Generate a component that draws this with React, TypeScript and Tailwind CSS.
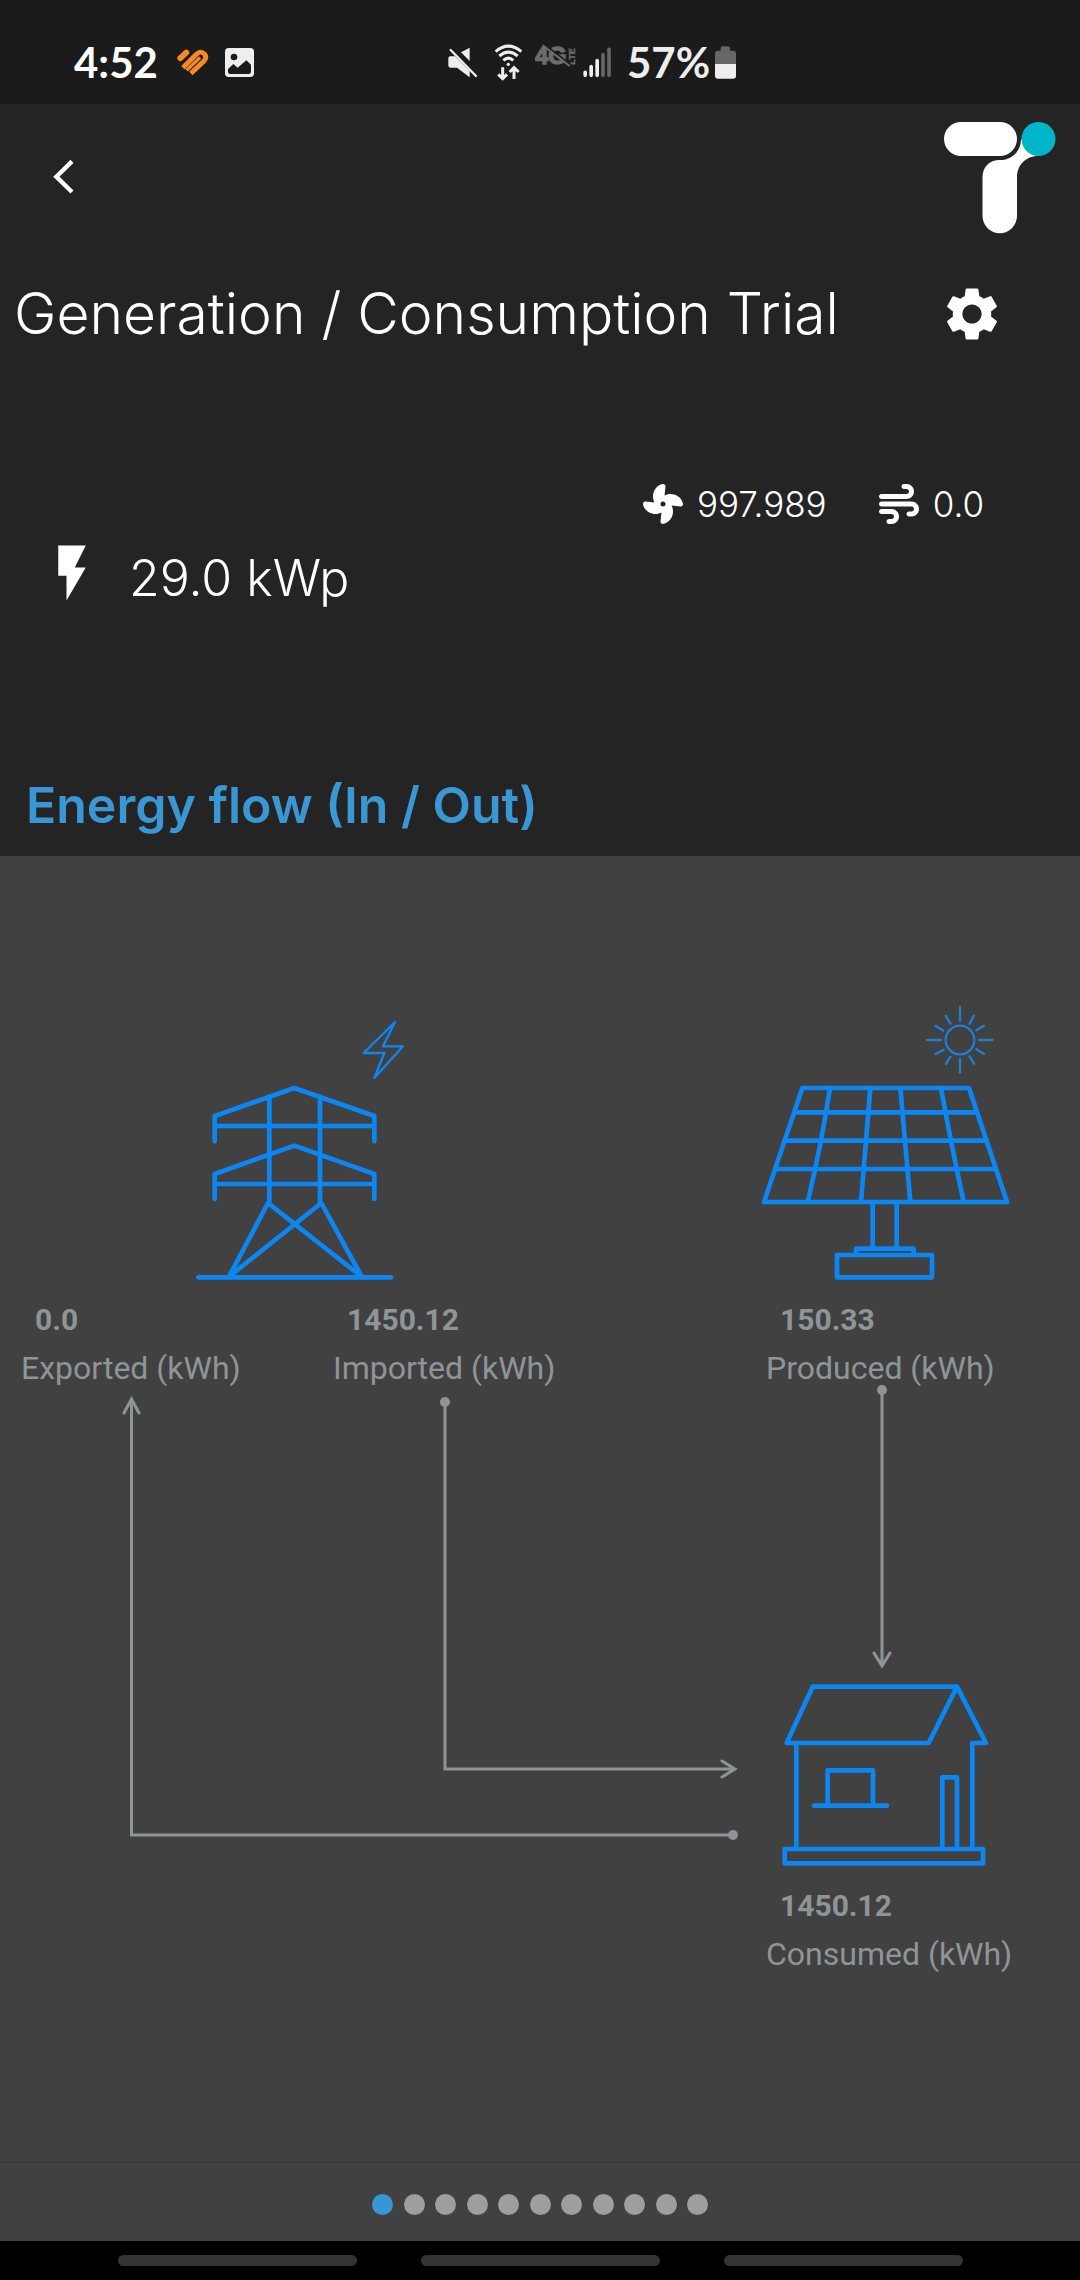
import { useState } from "react";
import { FaFan, FaWind } from "react-icons/fa6";
import { MdFlashOn, MdSettings } from "react-icons/md";

function StatusBar() {
  return (
    <div className="flex h-[104px] items-center bg-[#1b1b1b] pt-5 pl-[74px] font-['Lato',sans-serif] text-[42px] leading-none font-bold text-white">
      <span>4:52</span>
      <div className="ml-[18px] flex items-center gap-[15px]">
        <svg viewBox="528 148 100 88" className="h-[29px] w-[33px]" aria-label="Fitness">
          <g fill="none" stroke="#f58a28" strokeWidth="15">
            <path d="M541 179 L559 162" strokeWidth="18" strokeLinecap="round" />
            <path d="M549 208 L589 168 Q602 154 614 166 Q623 177 612 188 L573 225" />
            <path d="M560 216 L601 177" strokeWidth="10" />
          </g>
        </svg>
        <svg viewBox="672 144 93 93" className="size-[31px]" aria-label="Picture">
          <rect x="675" y="147" width="87" height="87" rx="11" fill="#eee" />
          <circle cx="702" cy="174" r="10" fill="#1b1b1b" />
          <path d="M684 210 L700 195 L713 206 L739 184 L753 197 V218 Q753 225 746 225 H691 Q684 225 684 218 Z" fill="#1b1b1b" />
        </svg>
      </div>
      <div className="ml-48 flex items-center text-[#eee]">
        <svg viewBox="78 138 93 102" className="h-[34px] w-[31px]" aria-label="Muted">
          <path d="M120 160 L146 146 V186 Z M82 178 Q82 172 88 172 H102 L146 216 V235 L108 206 H90 Q82 206 82 198 Z" fill="#eee" />
          <path d="M89 153 L165 231" stroke="#eee" strokeWidth="7" strokeLinecap="round" />
        </svg>
        <svg viewBox="219 129 87 117" className="ml-4 h-[39px] w-[29px]" aria-label="Wi-Fi">
          <g fill="none" stroke="#eee" strokeWidth="9">
            <path d="M224 155 Q262 122 301 155" />
            <path d="M235 168 Q262 145 290 168" />
            <path d="M247 181 Q262 168 277 181" />
            <path d="M245 202 V235 M232 223 L245 236 L258 223 M279 237 V204 M266 216 L279 203 L293 216" />
          </g>
          <circle cx="262" cy="193" r="5" fill="#eee" />
        </svg>
        <svg viewBox="345 129 123 117" className="ml-3 h-[39px] w-[41px]" aria-label="4G LTE off">
          <g fill="#6c6c6c" stroke="#6c6c6c" fontWeight="700" fontFamily="Liberation Sans, sans-serif">
            <text x="346" y="192" fontSize="70" strokeWidth="4">
              4G
            </text>
            <text transform="translate(465 194) rotate(-90)" fontSize="27" strokeWidth="1">
              LTE
            </text>
          </g>
          <path d="M371 132 L453 194" stroke="#1b1b1b" strokeWidth="5" />
          <path d="M368 136 L449 198" stroke="#6c6c6c" strokeWidth="6" />
        </svg>
        <svg viewBox="486 138 90 96" className="ml-1.5 h-8 w-[30px]" aria-label="Signal">
          <g strokeWidth="11" strokeLinecap="round">
            <path d="M495.500 217 V226 M513.500 200 V226 M531.500 182 V226" stroke="#eee" />
            <path d="M549 164 V226 M567 148 V226" stroke="#666" />
          </g>
        </svg>
        <span className="ml-[15px]">57%</span>
        <svg viewBox="882 138 69 105" className="ml-1 h-[35px] w-[23px]" aria-label="Battery">
          <path d="M885 195 V164 Q885 155 894 155 H902 V147 Q902 142 908 142 H924 Q930 142 930 147 V155 H939 Q948 155 948 164 V195 Z" fill="#666" />
          <path d="M885 195 H948 V230 Q948 239 939 239 H894 Q885 239 885 230 Z" fill="#eee" />
        </svg>
      </div>
    </div>
  );
}

function Logo() {
  return (
    <svg viewBox="943 121 113 113" className="size-[113px]" aria-label="Brand logo">
      <rect x="944" y="122" width="73" height="34" rx="17" fill="#fff" />
      <path
        d="M982.500 178 C982.500 167 989 160 1000 160 C1012 160 1021 151 1021 139 L1038 156 C1026 156 1017 165 1017 177 V216 A17.250 17.250 0 0 1 982.500 216 Z"
        fill="#fff"
      />
      <circle cx="1038.500" cy="139" r="17" fill="#00b5c7" />
    </svg>
  );
}

function Stat({ value, label }: { value: string; label: string }) {
  return (
    <div className="flex flex-col gap-3.5 leading-[34px] whitespace-nowrap text-[#8e9598]">
      <strong className="pl-3.5 text-[30px] font-bold">{value}</strong>
      <span className="text-[32px]">{label}</span>
    </div>
  );
}

function Pylon() {
  return (
    <svg viewBox="45 54 636 792" className="h-[264px] w-[212px]" fill="none" stroke="#0c86f2" strokeWidth="14" strokeLinecap="round" strokeLinejoin="round" aria-label="Grid">
      <path d="M104 424 V348 L343 264 L583 348 V424 M104 378 H583" />
      <path d="M104 597 V522 L343 437 L583 522 V597 M104 552 H583" />
      <path d="M268 290 V607 M420 290 V607" />
      <path d="M147 830 L264 609 L545 830 L424 609 Z" />
      <path d="M55 832 H633" />
      <path d="M645 66 L551 159 H613 L583 234 L669 139 H609 Z" strokeWidth="7" />
    </svg>
  );
}

function SolarPanel() {
  return (
    <svg viewBox="60 42 756 834" className="h-[278px] w-[252px]" fill="none" stroke="#0c86f2" strokeWidth="14" strokeLinecap="round" strokeLinejoin="round" aria-label="Solar panel">
      <path d="M187 294 H687 L801 636 H72 Z" />
      <path d="M163 367 H711 M134 452 H739 M105 537 H768" />
      <path d="M270 294 Q245 460 203 636 M391 294 L363 636 M481 294 L511 636 M603 294 Q635 470 671 636" />
      <path d="M398 636 V776 M470 636 V776 M348 795 V776 H521 V795" />
      <path d="M291 795 H576 V862 H291 Z" />
      <g strokeWidth="7" stroke="#1f7fd6">
        <circle cx="660" cy="150" r="43" />
        <path d="M660 51 V93 M660 207 V248 M561 150 H603 M717 150 H758 M617 77 L631 101 M702 77 L689 101 M587 108 L610 122 M732 107 L709 121 M587 192 L611 179 M732 191 L709 178 M618 222 L631 200 M702 221 L689 199" />
      </g>
    </svg>
  );
}

function House() {
  return (
    <svg viewBox="240 66 630 558" className="h-[186px] w-[210px]" fill="none" stroke="#0c86f2" strokeWidth="14" strokeLinecap="round" strokeLinejoin="round" aria-label="House">
      <path d="M817 566 V249 H858 L771 80 H338 L260 249 H686 L771 80" />
      <path d="M289 249 V566 M727 566 V352 H771 V566" />
      <path d="M383 437 V331 H519 V437 M342 437 H561" />
      <path d="M254 567 H849 V610 H254 Z" />
    </svg>
  );
}

function GridConnectors() {
  return (
    <svg viewBox="120 1395 620 446" className="h-[446px] w-[620px]" fill="none" stroke="#8e9598" strokeWidth="3" strokeLinecap="round" aria-hidden="true">
      <path d="M131.500 1399 V1835 H733 M124 1413 L131.500 1399 L139 1413" />
      <path d="M445 1402 V1769 H735 M722 1761 L735 1769 L722 1777" />
      <g fill="#8e9598" stroke="none">
        <circle cx="733" cy="1835" r="5" />
        <circle cx="445" cy="1402" r="5" />
      </g>
    </svg>
  );
}

function SolarConnector() {
  return (
    <svg viewBox="871 1384 22 284" className="h-[284px] w-[22px]" fill="none" stroke="#8e9598" strokeWidth="3" strokeLinecap="round" aria-hidden="true">
      <path d="M882 1389 V1665 M874 1652 L882 1665 L890 1652" />
      <circle cx="882" cy="1389" r="5" fill="#8e9598" stroke="none" />
    </svg>
  );
}

const PAGES = Array.from({ length: 11 }, (_, i) => i);

export default function App() {
  const [page, setPage] = useState(0);

  return (
    <div className="flex min-h-screen flex-col bg-[#242424] font-['Inter',sans-serif] text-white">
      <StatusBar />

      <header className="flex h-[178px] items-start justify-between pt-[17px] pr-6 pl-12">
        <button type="button" aria-label="Back" className="mt-[34px] p-1">
          <svg viewBox="156 480 66 108" className="h-9 w-[22px]" fill="none" stroke="#fff" strokeWidth="13">
            <path d="M216 487 L169 533 L216 579" />
          </svg>
        </button>
        <Logo />
      </header>

      <div className="flex items-center justify-between pr-[76px] pl-3.5">
        <h1 className="text-[57px] leading-[64px] font-light whitespace-nowrap">Generation / Consumption Trial</h1>
        <button type="button" aria-label="Settings">
          <MdSettings className="size-16" />
        </button>
      </div>

      <div className="mt-[138px] flex items-center justify-end pr-24 text-[35px] leading-10 font-light">
        <FaFan className="size-10" />
        <span className="ml-3.5">997.989</span>
        <FaWind className="ml-[52px] size-10" />
        <span className="ml-3.5">0.0</span>
      </div>

      <div className="mt-4 flex items-end gap-6 pl-[39px]">
        <MdFlashOn className="size-[66px]" />
        <span className="text-[50px] leading-[56px] font-light">29.0 kWp</span>
      </div>

      <h2 className="mt-[169px] pb-[21px] pl-[26px] text-[50px] leading-[60px] font-semibold text-[#3a97d4]">
        Energy flow (In / Out)
      </h2>

      <main className="flex flex-1 bg-[#414141] font-['Roboto',sans-serif]">
        <section className="flex-1 pt-[162px]">
          <div className="pl-[195px]">
            <Pylon />
          </div>
          <div className="mt-[21px] grid grid-cols-[312px_1fr] pl-[21px]">
            <Stat value="0.0" label="Exported (kWh)" />
            <Stat value="1450.12" label="Imported (kWh)" />
          </div>
          <div className="mt-2.5 pl-[120px]">
            <GridConnectors />
          </div>
        </section>
        <section className="w-[334px] shrink-0 pt-[148px]">
          <div className="pl-3.5">
            <SolarPanel />
          </div>
          <div className="mt-[21px] pl-5">
            <Stat value="150.33" label="Produced (kWh)" />
          </div>
          <div className="pl-[125px]">
            <SolarConnector />
          </div>
          <div className="mt-[13px] pl-[34px]">
            <House />
          </div>
          <div className="mt-[21px] pl-5">
            <Stat value="1450.12" label="Consumed (kWh)" />
          </div>
        </section>
      </main>

      <nav aria-label="Pages" className="flex h-20 items-center justify-center border-t-2 border-[#3b3b3b] bg-[#414141] pt-1">
        <div className="flex w-[336px] justify-between">
          {PAGES.map((i) => (
            <button
              key={i}
              type="button"
              aria-label={`Page ${i + 1}`}
              onClick={() => setPage(i)}
              className={i === page ? "size-[21px] rounded-full bg-[#3796d3]" : "size-[21px] rounded-full bg-[#9e9e9e]"}
            />
          ))}
        </div>
      </nav>

      <div className="flex h-[39px] items-center justify-center gap-16 bg-black">
        <span className="h-[11px] w-[239px] rounded-full bg-[#333]" />
        <span className="h-[11px] w-[239px] rounded-full bg-[#333]" />
        <span className="h-[11px] w-[239px] rounded-full bg-[#333]" />
      </div>
    </div>
  );
}
